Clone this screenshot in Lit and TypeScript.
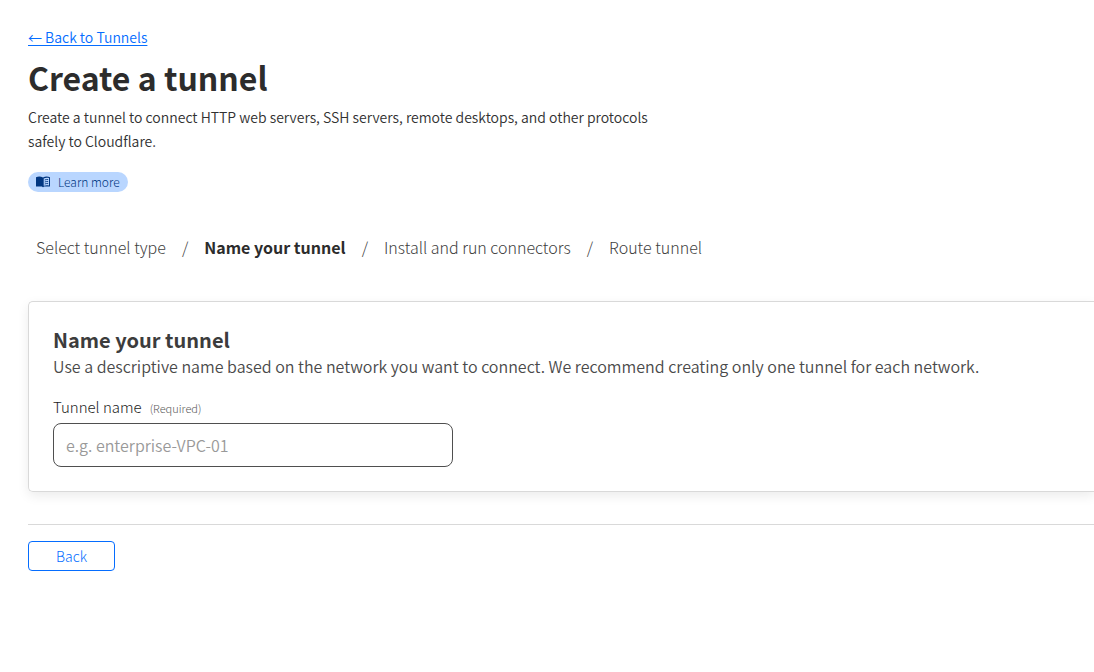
import { LitElement, html, css } from "lit";
import { customElement, property, state } from "lit/decorators.js";
import { classMap } from "lit/directives/class-map.js";

@customElement("step-trail")
export class StepTrail extends LitElement {
  static styles = css`
    :host { display: block; }
    .steps {
      display: flex;
      flex-wrap: wrap;
      margin: 0;
      padding: 0 8px;
      list-style: none;
      color: #404040;
      font-weight: 300;
    }
    .step + .step::before {
      content: "/";
      padding: 0 16px;
      font-weight: 300;
      color: #404040;
    }
    .current { font-weight: 700; color: #2c2c2c; }
  `;

  @property({ attribute: false }) steps: string[] = [];
  @property({ type: Number }) current = 0;

  render() {
    return html`<nav aria-label="Progress">
      <ol class="steps">
        ${this.steps.map(
          (step, i) => html`<li
            class=${classMap({ step: true, current: i === this.current })}
            aria-current=${i === this.current ? "step" : "false"}
          >${step}</li>`
        )}
      </ol>
    </nav>`;
  }
}

@customElement("app-root")
export class AppRoot extends LitElement {
  static styles = css`
    :host {
      display: block;
      overflow: hidden;
      background: #fff;
      color: #313131;
      font-family: "Malgun Gothic", "Noto Sans CJK KR", sans-serif;
      font-size: 16px;
      font-weight: 350;
      line-height: 24px;
    }
    *, *::before, *::after { box-sizing: border-box; }
    h1, h2, p { margin: 0; }
    .page { padding: 27px 0 32px 28px; }
    .intro {
      display: flex;
      flex-direction: column;
      align-items: flex-start;
      max-width: 640px;
      font-size: 14px;
    }
    .back-link {
      color: #056dff;
      line-height: 20px;
      text-underline-offset: 2px;
    }
    h1 {
      margin: 10px 0 8px;
      font-size: 32px;
      line-height: 40px;
      font-weight: 700;
      color: #2c2c2c;
    }
    .learn {
      display: inline-flex;
      align-items: center;
      gap: 8px;
      margin-top: 19px;
      padding: 0 8px;
      border-radius: 10px;
      background: #b9d6ff;
      color: #003681;
      font-size: 12px;
      font-weight: 300;
      line-height: 20px;
      text-decoration: none;
    }
    .learn svg { display: block; }
    .trail { margin: 43px 0 42px; }
    .card {
      padding: 24px;
      border: 1px solid #d9d9d9;
      border-right: 0;
      border-radius: 5px 0 0 5px;
      box-shadow: 0 4px 12px rgba(0, 0, 0, 0.08);
      color: #4a4a4a;
    }
    h2 {
      font-size: 20px;
      line-height: 28px;
      font-weight: 700;
      color: #3c3c3c;
    }
    .field {
      display: flex;
      flex-direction: column;
      gap: 3px;
      margin-top: 17px;
      max-width: 400px;
    }
    .caption {
      display: flex;
      align-items: baseline;
      gap: 8px;
      color: #1d1d1d;
      font-size: 15px;
      font-weight: 300;
    }
    .required { font-size: 11px; color: #595959; }
    .text-input {
      width: 100%;
      height: 44px;
      padding: 0 12px;
      border: 1px solid #4f4f4f;
      border-radius: 8px;
      background: #fff;
      color: #313131;
      font: inherit;
    }
    .text-input::placeholder { color: #999; opacity: 1; }
    .actions {
      margin-top: 32px;
      padding-top: 16px;
      border-top: 1px solid #d9d9d9;
    }
    .back-button {
      display: block;
      height: 30px;
      padding: 0 27px;
      border: 1px solid #056dff;
      border-radius: 4px;
      background: #fff;
      color: #056dff;
      font: inherit;
      font-size: 14px;
      font-weight: 300;
      line-height: 28px;
      cursor: pointer;
    }
  `;

  @state() private tunnelName = "";

  private steps = [
    "Select tunnel type",
    "Name your tunnel",
    "Install and run connectors",
    "Route tunnel",
  ];

  private onInput(e: Event) {
    this.tunnelName = (e.target as HTMLInputElement).value;
  }

  render() {
    return html`<main class="page">
      <header class="intro">
        <a class="back-link" href="#tunnels">← Back to Tunnels</a>
        <h1>Create a tunnel</h1>
        <p>
          Create a tunnel to connect HTTP web servers, SSH servers, remote
          desktops, and other protocols safely to Cloudflare.
        </p>
        <a class="learn" href="#learn-more">
          <svg width="14" height="12" viewBox="0 0 14 12" aria-hidden="true">
            <path
              fill="#003681"
              fill-rule="evenodd"
              d="M0 1.2C2.300.3 4.800.3 7 1.500 9.200.3 11.700.3 14 1.200V10.600H8C7.700 11.100 7.400 11.300 7 11.300S6.300 11.100 6 10.600H0ZM7.700 2.400V9.800C9.400 9.100 11.200 9 13 9.400V2C11.200 1.500 9.400 1.600 7.700 2.400Z"
            />
            <path
              fill="none"
              stroke="#003681"
              stroke-width="0.9"
              d="M8.700 4Q10.400 3.300 12.200 3.600M8.700 6Q10.400 5.300 12.200 5.600M8.700 8Q10.400 7.300 12.200 7.600"
            />
          </svg>
          <span>Learn more</span>
        </a>
      </header>

      <step-trail class="trail" .steps=${this.steps} .current=${1}></step-trail>

      <section class="card">
        <h2>Name your tunnel</h2>
        <p>
          Use a descriptive name based on the network you want to connect. We
          recommend creating only one tunnel for each network.
        </p>
        <div class="field">
          <label class="caption" for="tunnel-name">
            <span>Tunnel name</span>
            <span class="required">(Required)</span>
          </label>
          <input
            class="text-input"
            id="tunnel-name"
            type="text"
            required
            placeholder="e.g. enterprise-VPC-01"
            .value=${this.tunnelName}
            @input=${this.onInput}
          />
        </div>
      </section>

      <footer class="actions">
        <button class="back-button" type="button">Back</button>
      </footer>
    </main>`;
  }
}
